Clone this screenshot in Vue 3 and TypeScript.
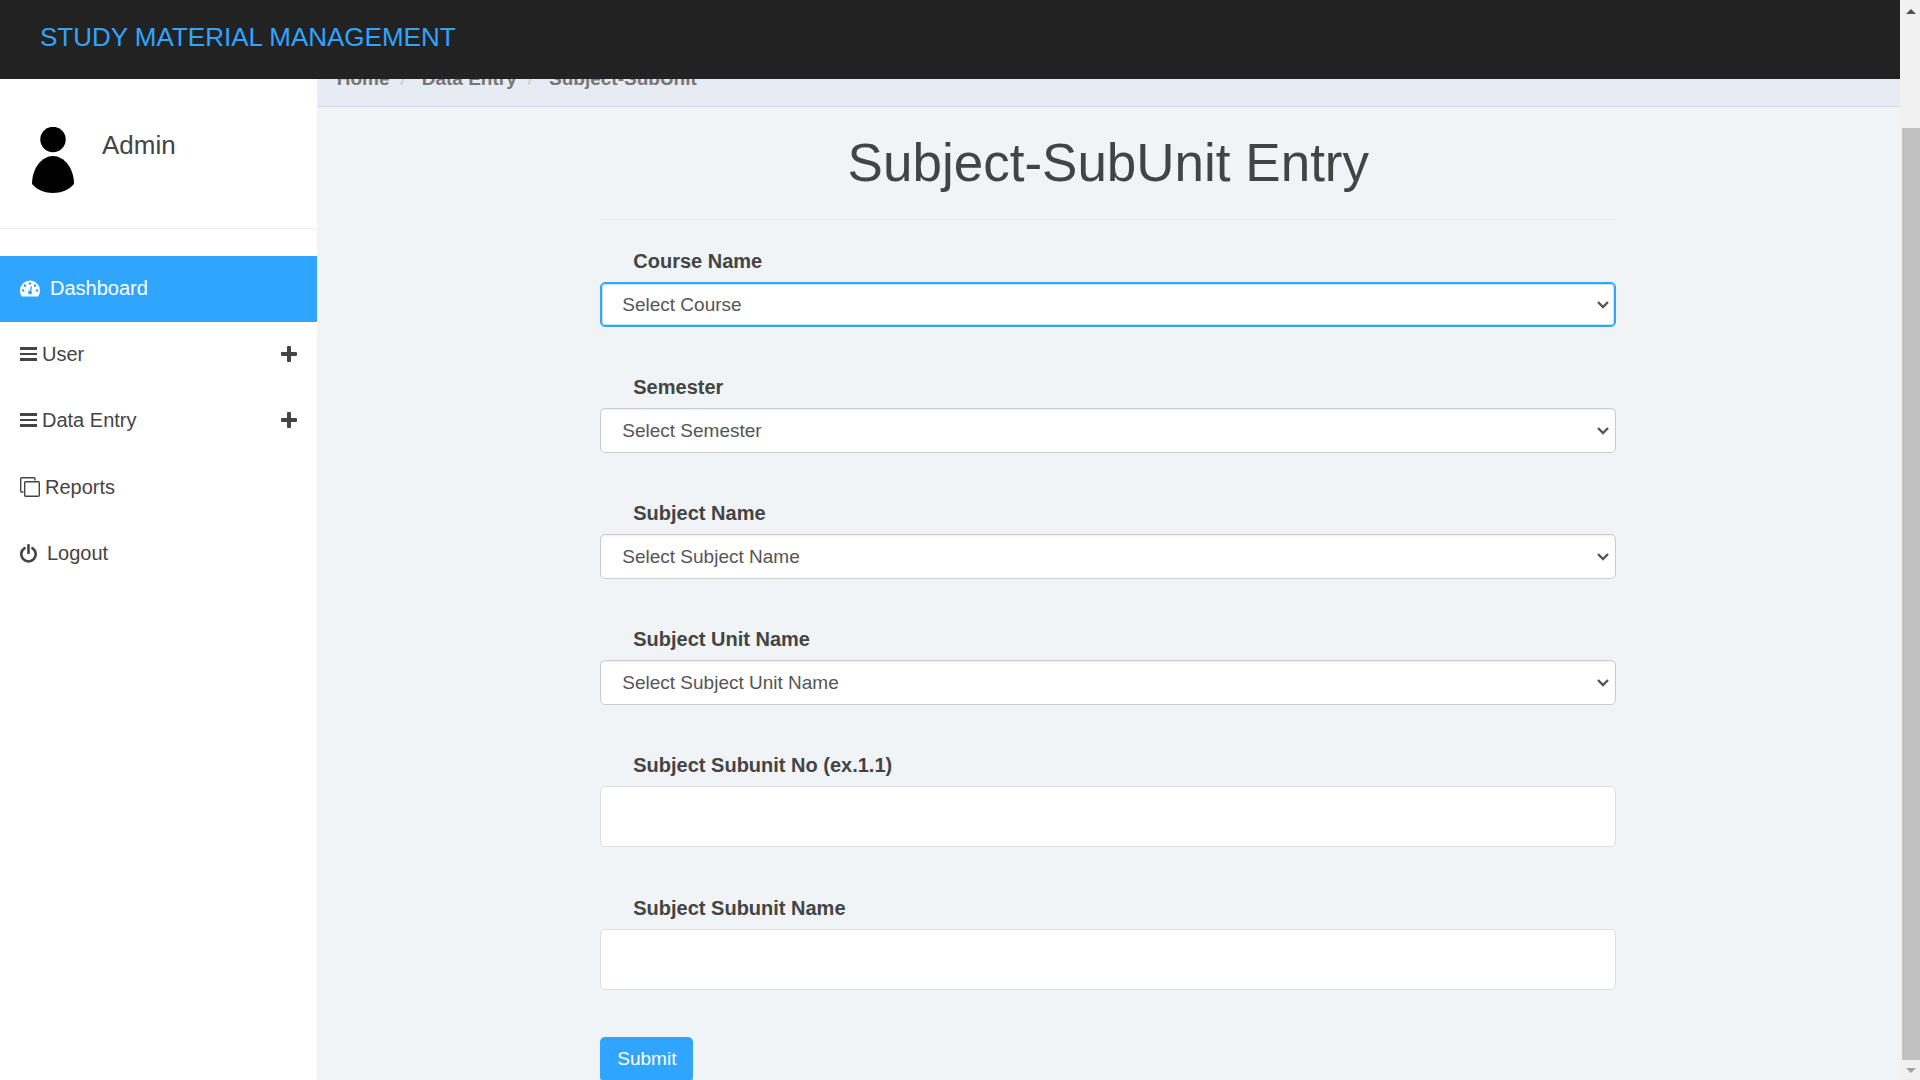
<script setup lang="ts">
import { reactive } from 'vue'

interface SelectField {
  id: string
  label: string
  placeholder: string
  focused: boolean
}

interface TextField {
  id: string
  label: string
}

const crumbs: string[] = ['Home', 'Data Entry', 'Subject-SubUnit']

const selectFields: SelectField[] = [
  { id: 'course', label: 'Course Name', placeholder: 'Select Course', focused: true },
  { id: 'semester', label: 'Semester', placeholder: 'Select Semester', focused: false },
  { id: 'subject', label: 'Subject Name', placeholder: 'Select Subject Name', focused: false },
  { id: 'unit', label: 'Subject Unit Name', placeholder: 'Select Subject Unit Name', focused: false },
]

const textFields: TextField[] = [
  { id: 'subunitNo', label: 'Subject Subunit No (ex.1.1)' },
  { id: 'subunitName', label: 'Subject Subunit Name' },
]

const form = reactive<Record<string, string>>({
  course: '',
  semester: '',
  subject: '',
  unit: '',
  subunitNo: '',
  subunitName: '',
})
</script>

<template>
  <div class="app">
    <div class="page">
      <header class="topbar">
        <a class="brand" href="#">STUDY MATERIAL MANAGEMENT</a>
      </header>

      <div class="columns">
        <aside class="sidebar">
          <div class="profile">
            <svg class="avatar" viewBox="0 0 42 66" aria-hidden="true">
              <circle cx="21" cy="12.5" r="12.7" />
              <path d="M21 29C32 29 42 41 42 57C37 63 29 66 21 66S5 63 0 57C0 41 10 29 21 29Z" />
            </svg>
            <span class="profile-name">Admin</span>
          </div>

          <nav class="menu">
            <a class="item active" href="#">
              <svg class="icon dash" viewBox="0 0 20 17" aria-hidden="true">
                <path
                  d="M10 0.5A10 10 0 0 0 0 10.5C0 12.6 0.6 14.4 1.6 16C1.8 16.4 2.2 16.5 2.6 16.5H17.4C17.8 16.5 18.2 16.4 18.4 16C19.4 14.4 20 12.6 20 10.5A10 10 0 0 0 10 0.5Z"
                />
                <g class="dash-holes">
                  <circle cx="3" cy="10.5" r="1.3" />
                  <circle cx="5" cy="5.6" r="1.3" />
                  <circle cx="10" cy="3.5" r="1.3" />
                  <circle cx="15" cy="5.6" r="1.3" />
                  <circle cx="17" cy="10.5" r="1.3" />
                  <circle cx="10" cy="12.5" r="2" />
                  <path d="M10.8 6.2L12 6.5L10.9 12.5L9.5 12.2Z" />
                </g>
              </svg>
              <span>Dashboard</span>
            </a>
            <a class="item tight" href="#">
              <svg class="icon bars" viewBox="0 0 17 14" aria-hidden="true">
                <path d="M0 0H17V3H0ZM0 6H17V8H0ZM0 11H17V14H0Z" />
              </svg>
              <span>User</span>
              <svg class="plus" viewBox="0 0 16 16" aria-hidden="true">
                <path d="M6 1Q6 0 7 0H9Q10 0 10 1V6H15Q16 6 16 7V9Q16 10 15 10H10V15Q10 16 9 16H7Q6 16 6 15V10H1Q0 10 0 9V7Q0 6 1 6H6Z" />
              </svg>
            </a>
            <a class="item tight" href="#">
              <svg class="icon bars" viewBox="0 0 17 14" aria-hidden="true">
                <path d="M0 0H17V3H0ZM0 6H17V8H0ZM0 11H17V14H0Z" />
              </svg>
              <span>Data Entry</span>
              <svg class="plus" viewBox="0 0 16 16" aria-hidden="true">
                <path d="M6 1Q6 0 7 0H9Q10 0 10 1V6H15Q16 6 16 7V9Q16 10 15 10H10V15Q10 16 9 16H7Q6 16 6 15V10H1Q0 10 0 9V7Q0 6 1 6H6Z" />
              </svg>
            </a>
            <a class="item tight tall" href="#">
              <svg class="icon copies" viewBox="0 0 20 20" aria-hidden="true">
                <rect x="4.7" y="4.7" width="14.6" height="14.6" rx="1" />
                <path d="M15 3.5V1.7Q15 0.7 14 0.7H1.7Q0.7 0.7 0.7 1.7V14Q0.7 15 1.7 15H3.5" />
              </svg>
              <span>Reports</span>
            </a>
            <a class="item" href="#">
              <svg class="icon power" viewBox="0 0 17 19" aria-hidden="true">
                <path d="M4.6 4.2A7.2 7.2 0 1 0 12.4 4.2" />
                <path d="M8.5 1.2V9" />
              </svg>
              <span>Logout</span>
            </a>
          </nav>
        </aside>

        <main class="main">
          <ol class="breadcrumb">
            <li v-for="crumb in crumbs" :key="crumb">{{ crumb }}</li>
          </ol>

          <form class="entry" @submit.prevent>
            <h1>Subject-SubUnit Entry</h1>
            <hr />

            <div v-for="field in selectFields" :key="field.id" class="group">
              <label :for="field.id">{{ field.label }}</label>
              <div class="select-wrap">
                <select :id="field.id" v-model="form[field.id]" :class="{ focused: field.focused }">
                  <option value="">{{ field.placeholder }}</option>
                </select>
                <svg class="chevron" viewBox="0 0 12 8" aria-hidden="true">
                  <path d="M1 1L6 6L11 1" />
                </svg>
              </div>
            </div>

            <div v-for="field in textFields" :key="field.id" class="group text">
              <label :for="field.id">{{ field.label }}</label>
              <input :id="field.id" v-model="form[field.id]" type="text" />
            </div>

            <button type="submit">Submit</button>
          </form>
        </main>
      </div>
    </div>

    <div class="scrollbar" aria-hidden="true">
      <svg class="arrow up" viewBox="0 0 10 5"><path d="M5 0L10 5H0Z" /></svg>
      <div class="thumb"></div>
      <svg class="arrow down" viewBox="0 0 10 5"><path d="M0 0H10L5 5Z" /></svg>
    </div>
  </div>
</template>

<style>
body {
  margin: 0;
}
</style>

<style scoped>
.app {
  display: flex;
  height: 100vh;
  overflow: hidden;
  background: #f0f4f7;
  color: #444;
  font-family: 'Liberation Sans', Arial, sans-serif;
  font-size: 20px;
  line-height: 28px;
}

.app * {
  box-sizing: border-box;
}

.page {
  flex: 1;
  min-width: 0;
  display: flex;
  flex-direction: column;
}

.topbar {
  position: relative;
  z-index: 1;
  flex: none;
  height: 79px;
  padding: 23px 40px;
  background: #222;
}

.brand {
  color: #30a5ff;
  font-size: 26px;
  text-decoration: none;
}

.columns {
  flex: 1;
  min-height: 0;
  display: grid;
  grid-template-columns: 2fr 10fr;
}

.sidebar {
  background: #fff;
}

.profile {
  display: flex;
  gap: 28px;
  height: 150px;
  padding: 48px 32px 0;
  border-bottom: 1px solid #e9ecf2;
}

.avatar {
  width: 42px;
  height: 66px;
  fill: #000;
}

.profile-name {
  padding-top: 4px;
  font-size: 26px;
}

.menu {
  padding-top: 27px;
}

.item {
  display: flex;
  align-items: center;
  gap: 10px;
  height: 66px;
  padding: 0 20px 2px;
  color: #444;
  text-decoration: none;
}

.item.tight {
  gap: 5px;
}

.item.tall {
  height: 67px;
}

.item.active {
  background: #30a5ff;
  color: #fff;
}

.icon {
  flex: none;
  fill: currentColor;
}

.dash {
  width: 20px;
  height: 17px;
}

.dash-holes {
  fill: #30a5ff;
}

.bars {
  width: 17px;
  height: 14px;
}

.copies {
  width: 20px;
  height: 20px;
  fill: none;
  stroke: currentColor;
  stroke-width: 1.4;
}

.power {
  width: 17px;
  height: 19px;
  fill: none;
  stroke: currentColor;
  stroke-width: 2.6;
  stroke-linecap: round;
}

.plus {
  width: 16px;
  height: 16px;
  margin-left: auto;
  fill: currentColor;
}

.main {
  min-width: 0;
  margin-top: -28px;
}

.breadcrumb {
  display: flex;
  align-items: center;
  height: 56px;
  margin: 0;
  padding: 0 20px;
  list-style: none;
  background: #e7ebf3;
  border-bottom: 1px solid #d5d9dd;
  color: #777;
  font-size: 19px;
  font-weight: bold;
}

.breadcrumb li + li::before {
  content: '/';
  padding: 0 16px 0 11px;
  color: #ccc;
  font-weight: normal;
}

.entry {
  width: 66.7%;
  margin: 0 auto;
  padding: 0 20px;
}

h1 {
  margin: 0;
  padding: 26px 0;
  font-size: 53px;
  font-weight: normal;
  line-height: 60px;
  text-align: center;
}

hr {
  height: 1px;
  margin: 0 0 27px;
  border: 0;
  background: #eaeef0;
}

.group {
  display: flex;
  flex-direction: column;
  gap: 7px;
  margin-bottom: 46px;
}

.group.text {
  margin-bottom: 47px;
}

label {
  padding-left: 33px;
  font-weight: bold;
}

.select-wrap {
  position: relative;
}

select,
input {
  display: block;
  width: 100%;
  height: 45px;
  padding: 0 21px;
  border: 1px solid #ccc;
  border-radius: 5px;
  outline: 0;
  background: #fff;
  color: #555;
  font-family: inherit;
  font-size: 19px;
  appearance: none;
}

select {
  box-shadow: inset 0 1px 2px rgba(0, 0, 0, 0.08);
}

select.focused {
  border-color: #30a5ff;
  box-shadow: inset 0 0 0 1px #30a5ff, inset 0 0 0 2px #c5e5ff;
}

input {
  height: 61px;
  border-color: #dddfe1;
}

.chevron {
  position: absolute;
  top: 19px;
  right: 7px;
  width: 12px;
  height: 8px;
  fill: none;
  stroke: #555;
  stroke-width: 2.4;
  pointer-events: none;
}

button {
  display: block;
  height: 45px;
  padding: 0 17px 2px;
  border: 0;
  border-radius: 5px;
  background: #30a5ff;
  color: #fff;
  font-family: inherit;
  font-size: 19px;
}

.scrollbar {
  flex: none;
  display: flex;
  flex-direction: column;
  align-items: center;
  width: 20px;
  padding-left: 2px;
  background: #f1f1f1;
}

.arrow {
  flex: none;
  width: 10px;
  height: 5px;
  fill: #505050;
}

.arrow.up {
  margin: 9px 0 114px;
}

.arrow.down {
  margin: 8px 0 7px;
  fill: #a3a3a3;
}

.thumb {
  flex: 1;
  align-self: stretch;
  background: #c1c1c1;
}
</style>
